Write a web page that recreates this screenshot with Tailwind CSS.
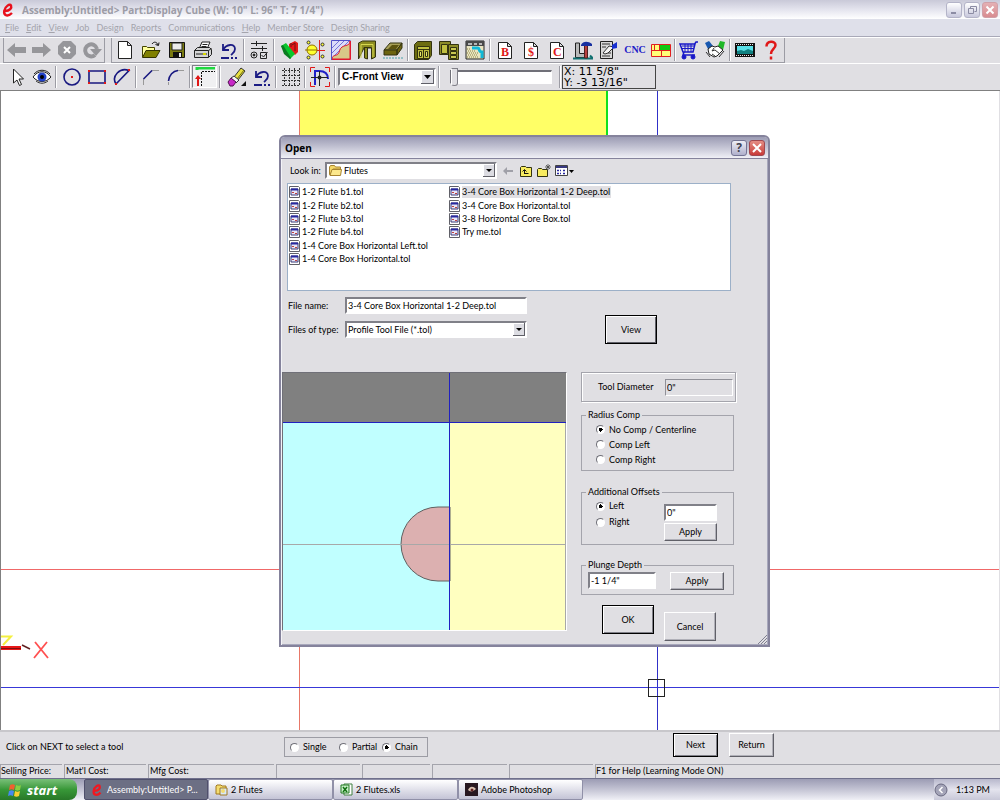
<!DOCTYPE html>
<html lang="en">
  <head>
    <meta charset="UTF-8" />
    <meta name="viewport" content="width=device-width, initial-scale=1.0" />
    <title>Assembly:Untitled - Part:Display Cube</title>
    <script src="https://cdn.jsdelivr.net/npm/@tailwindcss/browser@4"></script>
  </head>
  <body
    class="relative flex h-screen flex-col overflow-hidden bg-[#e0dfe3] font-['Lato','Liberation_Sans',sans-serif] text-[9px] leading-[12px] font-normal text-black"
  >
    <!-- Title bar -->
    <header class="flex h-[19px] items-center gap-2 bg-linear-to-b from-[#c9c9d8] via-[#e4e4ee] to-white px-[2px]">
      <svg class="h-4 w-3" viewBox="0 0 12 16" fill="none" stroke="#e8101c" stroke-width="2.4">
        <path d="M3 9 C8 9 10 6 9 3.500 C8 1.500 3 4 2.200 9 C1.500 14 6 15 10 11" />
      </svg>
      <h1 class="grow font-['Open_Sans',sans-serif] text-[10px] font-bold text-[#9c9ca6]">
        Assembly:Untitled&gt; Part:Display Cube (W: 10" L: 96" T: 7 1/4")
      </h1>
      <div class="flex gap-[2px]">
        <button aria-label="Minimize" class="h-4 w-4 rounded-[3px] border border-[#b4b4c8] bg-linear-to-b from-white to-[#c8c8dc]">
          <svg viewBox="0 0 14 14"><path d="M4 10h5" stroke="#8c8ca4" stroke-width="2" /></svg>
        </button>
        <button aria-label="Restore" class="h-4 w-4 rounded-[3px] border border-[#b4b4c8] bg-linear-to-b from-white to-[#c8c8dc]">
          <svg viewBox="0 0 14 14" fill="none" stroke="#8c8ca4"><path d="M5.500 5V3.500h6v5H9.500M3.500 5.500h5v5h-5z" /></svg>
        </button>
        <button aria-label="Close" class="h-4 w-4 rounded-[3px] border border-[#d0a0a8] bg-linear-to-b from-[#e4b0b4] to-[#d88c90]">
          <svg viewBox="0 0 14 14"><path d="M3.500 3.500l7 7M10.500 3.500l-7 7" stroke="#fff" stroke-width="2" /></svg>
        </button>
      </div>
    </header>

    <!-- Menu -->
    <nav class="flex h-[18px] items-center gap-[7px] border-b border-[#a9a9b8] bg-[#dfe0ea] px-[5px] text-[#a4a4ac]">
      <a href="#"><u>F</u>ile</a>
      <a href="#"><u>E</u>dit</a>
      <a href="#"><u>V</u>iew</a>
      <a href="#">Job</a>
      <a href="#">Design</a>
      <a href="#">Reports</a>
      <a href="#">Communications</a>
      <a href="#"><u>H</u>elp</a>
      <a href="#">Member Store</a>
      <a href="#">Design Sharing</a>
    </nav>

    <!-- Main toolbar -->
    <div class="flex h-[26px] border-t border-white">
      <div class="ml-[3px] flex items-center border-r border-b border-l border-[#9c9ca4] [&>button]:flex [&>button]:w-[25px] [&>button]:justify-center [&_svg]:size-5">
        <button aria-label="Back"><svg viewBox="0 0 20 20"><path d="M0 10L8 3v4h11v6H8v4z" fill="#96969a" /></svg></button>
        <button aria-label="Forward"><svg viewBox="0 0 20 20"><path d="M19 10L11 3v4H0v6h11v4z" fill="#96969a" /></svg></button>
        <button aria-label="Stop">
          <svg viewBox="0 0 20 20"><path d="M6 1h8l5 5v8l-5 5H6l-5-5V6z" fill="#96969a" /><path d="M7 7l6 6M13 7l-6 6" stroke="#fff" stroke-width="2" /></svg>
        </button>
        <button aria-label="Refresh">
          <svg viewBox="0 0 20 20" fill="none"><path d="M13 15A6 6 0 1 1 15 9" stroke="#96969a" stroke-width="4" /><path d="M8 9h12l-6 7z" fill="#96969a" /></svg>
        </button>
      </div>
      <div class="ml-[6px] flex items-center border-r border-b border-l border-[#9c9ca4] [&>button]:flex [&>button]:w-[26px] [&>button]:justify-center [&_svg]:size-5">
        <button aria-label="New"><svg viewBox="0 0 20 20"><path d="M3.500 1.500h9l4 4v13h-13zM12.500 1.500v4h4" fill="#fff" stroke="#222" /></svg></button>
        <button aria-label="Open">
          <svg viewBox="0 0 20 20"><path d="M1.500 17V6.500h4l1 1h7V11" fill="#ffff9c" stroke="#444400" /><path d="M1.500 17.500L5 10.500h14l-4 7z" fill="#808000" stroke="#333300" /><path d="M11 4c2-3 5-2 6 1M14.500 4.500l3 1 .5-3" fill="none" stroke="#111" /></svg>
        </button>
        <button aria-label="Save">
          <svg viewBox="0 0 20 20"><path d="M2.500 2.500h15v15h-15z" fill="#7a7a10" stroke="#111" /><path d="M5 3h10v7H5z" fill="#ececec" stroke="#222" /><path d="M6 12h9v6H6z" fill="#111" /><path d="M12 13h2v4h-2z" fill="#eee" /></svg>
        </button>
        <button aria-label="Print">
          <svg viewBox="0 0 20 20" stroke="#222"><path d="M6 9l3-7h8l-3 7z" fill="#fff" /><path d="M1.500 10.500l3-3h12l2 2v5l-3 3h-14z" fill="#d4d4d4" /><path d="M1.500 10.500h14v7M15.500 10.500l3-2M3 14h11" fill="none" /><path d="M10 14h3" stroke="#d8d800" stroke-width="2" /><path d="M9.500 4.500h5M8.500 6.500h5" /></svg>
        </button>
        <button aria-label="Undo">
          <svg viewBox="0 0 20 20" fill="none" stroke="#1c1c84" stroke-width="1.800"><path d="M4 4v6h6" /><path d="M4 10c3-6 12-7 12-1c0 3-2 4-4 6" /><path d="M2 18h8M12 18h2M16 18h2" /></svg>
        </button>
        <hr class="mx-px h-[22px] w-[2px] border-t-0 border-l border-[#9c9ca4] bg-white" />
        <button aria-label="Options">
          <svg viewBox="0 0 20 20" fill="none" stroke="#222"><path d="M2 3.500h16M7.500 1v5M2 8.500h16M13.500 6v5" /><circle cx="5" cy="15" r="3" /><circle cx="5" cy="15" r="1" fill="#111" /><path d="M11.500 12.500h6v6h-6zM12.500 15l2 2 4-5" /></svg>
        </button>
        <hr class="mx-px h-[22px] w-[2px] border-t-0 border-l border-[#9c9ca4] bg-white" />
        <button aria-label="Materials">
          <svg viewBox="0 0 20 20"><path d="M10 4l6-3 3 2v9l-3 3-6-7z" fill="#e41818" /><path d="M2 6l5-3 9 11-5 5z" fill="#0ac62c" /><path d="M2 6l2-1 8 13-1 1-6-5z" fill="#0a7c20" /><path d="M12 3v4M16 3v8M16 3l-3 2" stroke="#701010" fill="none" /></svg>
        </button>
        <button aria-label="Assembly parts">
          <svg viewBox="0 0 20 20"><path d="M14.500 0v20M8 10.500h12" stroke="#e02020" /><circle cx="7" cy="10" r="5" fill="#ffff30" stroke="#907000" /><path d="M0 10h12" stroke="#907000" /><circle cx="3.500" cy="2.500" r="1.500" fill="#ffff30" stroke="#333" /><circle cx="3.500" cy="17.500" r="1.500" fill="#ffff30" stroke="#333" /><circle cx="17.500" cy="4.500" r="1.500" fill="#ffff30" stroke="#333" /><circle cx="17.500" cy="16.500" r="1.500" fill="#ffff30" stroke="#333" /></svg>
        </button>
        <button aria-label="Profiles">
          <svg viewBox="0 0 20 20"><path d="M.5.500h19v19H.500z" fill="#dcdcf8" /><path d="M1 8l7-7M1 13L13 1M1 18L18 1" stroke="#7474d8" /><path d="M1 19c0-4 4-3 6-5s1-5 4-7 8-1 8-6v18z" fill="#d8c888" stroke="#e01830" /><path d="M.500 20V.500h19" fill="none" stroke="#5050c8" /><path d="M19.500 1v18.500H1" fill="none" stroke="#e01830" /></svg>
        </button>
        <button aria-label="Door">
          <svg viewBox="0 0 20 20" stroke="#333310"><path d="M1.500 19V3l4-2h13v16l-4 2V8h-4v11l-3-1V7z" fill="#8c8c20" /><path d="M4 18V4.500h12V17" stroke="#d8d850" fill="none" /><path d="M7.500 17V7.500h7" fill="none" /></svg>
        </button>
        <button aria-label="Drawer">
          <svg viewBox="0 0 20 20"><path d="M1 10l6-7h12l-5 7z" fill="#a8a058" stroke="#333310" /><path d="M5 9l4-4h7l-3 4z" fill="#5c5410" /><path d="M1 10h13v5H1zM14 10l5-7v5l-5 7z" fill="#6c6410" stroke="#333310" /><path d="M0 18h20" stroke="#48a0a8" stroke-dasharray="2 1" /></svg>
        </button>
        <hr class="mx-px h-[22px] w-[2px] border-t-0 border-l border-[#9c9ca4] bg-white" />
        <button aria-label="Cabinet">
          <svg viewBox="0 0 20 20" stroke="#333310"><path d="M1.500 4.500l3-3h14v14l-3 4h-14z" fill="#6c6c10" /><path d="M4.500 6.500h12v12h-12z" fill="#c0c040" /><path d="M5 9.500h11M10.500 10v8" /><path d="M6.500 11.500h2v5h-2zM12.500 11.500h2v5h-2z" fill="#e8e870" /></svg>
        </button>
        <button aria-label="Cabinet group">
          <svg viewBox="0 0 20 20" stroke="#333310"><path d="M.500 1.500h11v13H.500z" fill="#8c8c28" /><path d="M2.500 4.500h6v9h-6z" fill="#c0c040" /><path d="M9.500 4.500h10v15h-10z" fill="#8c8c28" /><path d="M11.500 7.500h6v3h-6zM11.500 11.500h6v3h-6zM11.500 15.500h6v3h-6z" fill="#c8c850" /></svg>
        </button>
        <button aria-label="Room layout">
          <svg viewBox="0 0 20 20"><path d="M1 1h18v18H1z" fill="#e8e4c0" stroke="#222" /><path d="M1 1h18v5H1z" fill="#484848" /><path d="M3 3h4v2H3zM9 3h3v2H9zM14 3h3v2h-3z" fill="#b8b8b8" /><path d="M7 8h6c2 0 0 4 4 4v6" fill="none" stroke="#10b8d8" stroke-width="3" /><path d="M2 9h4M3 11h8M2 13h11M3 15h10M2 17h12" stroke="#8c8040" stroke-dasharray="1 1" /></svg>
        </button>
        <hr class="mx-px h-[22px] w-[2px] border-t-0 border-l border-[#9c9ca4] bg-white" />
        <button aria-label="Bid">
          <svg viewBox="0 0 20 20"><path d="M3.500 2.500h9l4 4v12h-13zM12.500 2.500v4h4" fill="#fff" stroke="#222" /><text x="6" y="16" font-family="Liberation Serif" font-weight="bold" font-size="12" fill="#e01818">B</text></svg>
        </button>
        <button aria-label="Price">
          <svg viewBox="0 0 20 20"><path d="M3.500 2.500h9l4 4v12h-13zM12.500 2.500v4h4" fill="#fff" stroke="#222" /><text x="7" y="16" font-family="Liberation Serif" font-weight="bold" font-size="12" fill="#e01818">$</text></svg>
        </button>
        <button aria-label="Cut list">
          <svg viewBox="0 0 20 20"><path d="M3.500 2.500h9l4 4v12h-13zM12.500 2.500v4h4" fill="#fff" stroke="#222" /><text x="6" y="16" font-family="Liberation Serif" font-weight="bold" font-size="12" fill="#e01818">C</text></svg>
        </button>
        <button aria-label="Build">
          <svg viewBox="0 0 20 20"><path d="M2.500 3v14.500h9v-4h-5V3z" fill="#b8b8b8" stroke="#222" /><path d="M0 18.500h20l-3-3" stroke="#107070" stroke-width="2" fill="none" /><path d="M11.500 5h3v13h-3z" fill="#b84040" stroke="#502020" /><path d="M8 5c2-4 7-4 11-1v2H8z" fill="#1830a0" /></svg>
        </button>
        <button aria-label="Properties">
          <svg viewBox="0 0 20 20"><path d="M1.500 1.500h12v17h-12z" fill="#d8d8d8" stroke="#222" /><path d="M3 4h8M3 7h4M9 10h3M9 13h3M3 16h8" stroke="#333" /><path d="M4 13l6-7 5 1-6 6-3 1z" fill="#f4f4f4" stroke="#333" /><path d="M13 5l5-3v6l-5 1z" fill="#1830d0" /></svg>
        </button>
        <button class="font-['Liberation_Serif',serif] text-[10px] font-bold text-[#1c20c8]">CNC</button>
        <button aria-label="Nesting">
          <svg viewBox="0 0 20 20"><path d="M.500 4.500h19v12H.500z" fill="#ffff78" stroke="#e02020" /><path d="M9 5h10v5H9z" fill="#10c810" /><path d="M0 10.500h20M3.500 5v5M8.500 5v5M10.500 11v5M7 16.500h7" stroke="#e02020" /></svg>
        </button>
        <hr class="h-[22px] w-[2px] border-t-0 border-l border-[#9c9ca4] bg-white" />
        <button aria-label="Shop">
          <svg viewBox="0 0 20 20" fill="none" stroke="#1818c8"><path d="M1 4h15l-2 8H4zM15 5l2-3h2M5 12l-1 3h12" stroke-width="1.500" /><path d="M3 6h12M3 8.500h12M6 4v8M9 4v8M12 4v8" /><circle cx="5" cy="17" r="2" fill="#1818c8" /><circle cx="14" cy="17" r="2" fill="#1818c8" /></svg>
        </button>
        <button aria-label="Share">
          <svg viewBox="0 0 20 20"><path d="M0 3l4-2 4 5-4 5z" fill="#1858b0" /><path d="M20 2l-5-1-2 5 5 4z" fill="#20b828" /><path d="M3 9l4-3 3 1 3-1 5 4-6 6-3 1-5-3z" fill="#fff" stroke="#222" /><path d="M9 8l-2 3 3-1 5 4M7 14l3 2M1 12l4 5M19 11l-5 6" stroke="#333" fill="none" /></svg>
        </button>
        <hr class="mx-px h-[22px] w-[2px] border-t-0 border-l border-[#9c9ca4] bg-white" />
        <button aria-label="Videos">
          <svg viewBox="0 0 20 20"><path d="M0 3h20v14H0z" fill="#111" /><path d="M1 4.500h18M1 15.500h18" stroke="#e8e8e8" stroke-dasharray="1 1" /><path d="M2 6h16v8H2z" fill="#58e0e8" /><path d="M2 14v-3l4-1 3 1 4-2 5 2v3z" fill="#108080" /></svg>
        </button>
        <button aria-label="Help">
          <svg viewBox="0 0 20 20" fill="none" stroke="#e01818" stroke-width="2.500"><path d="M5.500 6.500c0-6 9-6 9-1.500c0 4-4.500 4-4.500 9M10 16.500v3" /></svg>
        </button>
      </div>
    </div>

    <!-- Drawing toolbar -->
    <div class="flex h-[28px] items-center border-t border-b border-t-white border-b-[#808080] pb-px pl-[4px] [&>button]:flex [&>button]:w-[25px] [&>button]:justify-center [&>button>svg]:size-5">
      <button aria-label="Select"><svg viewBox="0 0 20 20"><path d="M6.500 2v14l3.500-3 2.500 5.500 2-1L12 12h4.500z" fill="#fff" stroke="#222" /></svg></button>
      <button aria-label="View">
        <svg viewBox="0 0 20 20"><path d="M1 10c5-7 13-7 18 0c-5 6-13 6-18 0z" fill="#fff" stroke="#222" /><path d="M2 7C6 2 14 2 18 7" fill="none" stroke="#222" /><circle cx="10" cy="10" r="4.500" fill="#2040c8" /><circle cx="10" cy="10" r="2" fill="#000" /><path d="M4 14c4 3 8 3 12 0" stroke="#333" fill="none" /></svg>
      </button>
      <hr class="mr-[2px] ml-px h-[22px] w-[2px] border-t-0 border-l border-[#9c9ca4] bg-white" />
      <button aria-label="Circle"><svg viewBox="0 0 20 20"><circle cx="10" cy="10" r="8" fill="none" stroke="#181880" stroke-width="1.600" /><path d="M9 9h2v2H9z" fill="#e01818" /></svg></button>
      <button aria-label="Rectangle">
        <svg viewBox="0 0 20 20"><path d="M2 4h16v12H2z" fill="none" stroke="#181880" stroke-width="1.600" /><path d="M1 3h2v2H1zM17 3h2v2h-2zM1 15h2v2H1zM17 15h2v2h-2z" fill="#e01818" /></svg>
      </button>
      <button aria-label="Arc">
        <svg viewBox="0 0 20 20"><path d="M4 17C-1 9 8 0 17 3.500L4 17" fill="none" stroke="#181880" stroke-width="1.600" /><path d="M3 16h2v2H3zM16 2h2v2h-2z" fill="#e01818" /></svg>
      </button>
      <hr class="mx-px h-[22px] w-[2px] border-t-0 border-l border-[#9c9ca4] bg-white" />
      <button aria-label="Chamfer"><svg viewBox="0 0 20 20" fill="none"><path d="M2.500 18v-6M10 3.500h8" stroke="#999" /><path d="M2.500 12L11 3.500" stroke="#181880" stroke-width="1.600" /></svg></button>
      <button aria-label="Fillet"><svg viewBox="0 0 20 20" fill="none"><path d="M2.500 18v-3M12 3.500h6" stroke="#999" /><path d="M2.500 14C3 8 7 4 12 3.500" stroke="#181880" stroke-width="1.600" /></svg></button>
      <hr class="mx-px h-[22px] w-[2px] border-t-0 border-l border-[#9c9ca4] bg-white" />
      <button aria-label="Profile path" class="h-[23px] items-center border border-t-[#808088] border-r-white border-b-white border-l-[#808088] bg-[#f0f0f2]">
        <svg viewBox="0 0 20 20" fill="none"><path d="M2 3V1h18" stroke="#20d840" stroke-width="3" /><path d="M3 19V9" stroke="#e01818" stroke-width="2" /><path d="M0 12l3-4 3 4z" fill="#e01818" /><path d="M6.500 19V4.500H20" stroke="#111" stroke-dasharray="2 1" /></svg>
      </button>
      <hr class="mr-[3px] ml-[2px] h-[22px] w-[2px] border-t-0 border-l border-[#9c9ca4] bg-white" />
      <button aria-label="Erase">
        <svg viewBox="0 0 20 20"><path d="M7 10l7-9 4 3-7 9z" fill="#e8e040" stroke="#333" /><path d="M10 12L17 3" stroke="#6c6c10" /><path d="M4 11l3-2 5 4-3 3z" fill="#f4f4f4" stroke="#333" /><path d="M1 15l3-4 5 4-3 4H3z" fill="#c828c8" stroke="#501050" /><path d="M19 14v5h-5z" fill="#111" /></svg>
      </button>
      <button aria-label="Undo step">
        <svg viewBox="0 0 20 20" fill="none" stroke="#1c1c84" stroke-width="1.800"><path d="M4 4v6h6" /><path d="M4 10c3-6 12-7 12-1c0 3-2 4-4 6" /><path d="M2 18h8M12 18h2M16 18h2" /></svg>
      </button>
      <hr class="mx-px h-[22px] w-[2px] border-t-0 border-l border-[#9c9ca4] bg-white" />
      <button aria-label="Grid">
        <svg viewBox="0 0 20 20" fill="none" stroke="#333" stroke-dasharray="2 1"><path d="M3.500 1v18M8.500 1v18M13.500 1v18M18.500 1v18M1 3.500h18M1 8.500h18M1 13.500h18M1 18.500h18" /></svg>
      </button>
      <hr class="mx-px h-[22px] w-[2px] border-t-0 border-l border-[#9c9ca4] bg-white" />
      <button aria-label="Snap">
        <svg viewBox="0 0 20 20" fill="none"><path d="M.500 5V.500H5M15 .500h4.500V5M.500 15v4.500H5M15 19.500h4.500V15" stroke="#e01818" /><path d="M5 18V4h4c6 0 9 3 9 8" stroke="#2020c8" stroke-width="2" /><path d="M9.500 4v15M1 10.500h17" stroke="#222" /><circle cx="9.500" cy="10.500" r="2" fill="#222" /></svg>
      </button>
      <hr class="mx-[2px] h-[22px] w-[2px] border-t-0 border-l border-[#9c9ca4] bg-white" />
      <div class="relative">
        <select aria-label="View" class="block h-[18px] w-[98px] appearance-none border-2 border-t-[#808088] border-r-white border-b-white border-l-[#808088] bg-white pl-[2px] font-['Liberation_Sans',sans-serif] text-[10px] leading-[14px] font-bold">
          <option>C-Front View</option>
        </select>
        <svg class="pointer-events-none absolute top-[2px] right-[2px] h-[14px] w-[13px]" viewBox="0 0 13 14"><path d="M0 0h13v14H0z" fill="#606068" /><path d="M0 0h12v13H0z" fill="#fff" /><path d="M1 1h11v12H1z" fill="#dcdce2" /><path d="M3 5h7L6.500 9z" /></svg>
      </div>
      <hr class="mx-[2px] h-[22px] w-[2px] border-t-0 border-l border-[#9c9ca4] bg-white" />
      <input
        type="range"
        aria-label="Depth"
        value="0"
        class="ml-2 h-[14px] w-[102px] appearance-none border border-t-2 border-[#707078] border-r-white border-b-white bg-white [&::-webkit-slider-thumb]:h-[18px] [&::-webkit-slider-thumb]:w-[7px] [&::-webkit-slider-thumb]:appearance-none [&::-webkit-slider-thumb]:rounded-b-[3px] [&::-webkit-slider-thumb]:border [&::-webkit-slider-thumb]:border-[#808088] [&::-webkit-slider-thumb]:border-l-white [&::-webkit-slider-thumb]:bg-[#e0dfe3]"
      />
      <hr class="mr-px ml-[7px] h-[22px] w-[2px] border-t-0 border-l border-[#9c9ca4] bg-white" />
      <output class="h-[24px] w-[94px] border border-[#444] pl-px font-['DejaVu_Sans',sans-serif] text-[11px] leading-[11px]">X: 11 5/8"<br />Y: -3 13/16"</output>
    </div>

    <!-- Drawing area -->
    <main class="min-h-0 grow border-r border-l border-r-[#e0dfe3] border-l-[#808080] bg-white">
      <svg class="h-full w-full" shape-rendering="crispEdges" fill="none">
        <rect x="299" y="0" width="306" height="320" fill="#ffff66" />
        <rect x="298" y="0" width="1" height="640" fill="#e87868" />
        <rect x="605" y="0" width="2" height="320" fill="#10e020" />
        <rect x="0" y="478" width="1000" height="1" fill="#f06868" />
        <rect x="656" y="0" width="1" height="640" fill="#3030c8" />
        <rect x="0" y="596" width="1000" height="1" fill="#3838d8" />
        <rect x="647.500" y="588.500" width="16" height="17" stroke="#222" />
        <path d="M0 557h20" stroke="#e81818" stroke-width="4" />
        <path d="M0 557h20" stroke="#801010" />
        <g shape-rendering="auto">
          <path d="M0 545.500h10L2 554" stroke="#f4f040" stroke-width="2" />
          <path d="M21 554l8 4" stroke="#602020" stroke-width="1.500" />
          <path d="M34 551l13 16M46 551l-13 16" stroke="#ff5050" stroke-width="1.800" />
        </g>
      </svg>
    </main>

    <!-- Prompt bar -->
    <div class="flex h-[34px] items-center border-t-2 border-[#c8c7cb] pb-[2px] pl-[6px]">
      <p class="w-[278px]">Click on NEXT to select a tool</p>
      <div class="flex h-5 w-[144px] items-center border border-[#9c9ca4] pl-[5px]">
        <label class="flex w-[49px] items-center gap-1"><input type="radio" name="mode" class="size-[9px] appearance-none rounded-full border border-t-[#707078] border-r-white border-b-white border-l-[#707078] bg-white checked:bg-[radial-gradient(circle,#000_0_2px,#fff_2px)]" />Single</label>
        <label class="flex w-[43px] items-center gap-1"><input type="radio" name="mode" class="size-[9px] appearance-none rounded-full border border-t-[#707078] border-r-white border-b-white border-l-[#707078] bg-white checked:bg-[radial-gradient(circle,#000_0_2px,#fff_2px)]" />Partial</label>
        <label class="flex items-center gap-1"><input type="radio" name="mode" checked class="size-[9px] appearance-none rounded-full border border-t-[#707078] border-r-white border-b-white border-l-[#707078] bg-white checked:bg-[radial-gradient(circle,#000_0_2px,#fff_2px)]" />Chain</label>
      </div>
      <div class="ml-[245px] flex gap-[11px] pb-[4px]">
        <button class="h-6 w-[45px] border border-black shadow-[inset_1px_1px_#fff,inset_-1px_-1px_#808088]">Next</button>
        <button class="h-6 w-[45px] border border-t-white border-r-[#606068] border-b-[#606068] border-l-white shadow-[inset_-1px_-1px_#b0b0b8]">Return</button>
      </div>
    </div>

    <!-- Status bar -->
    <footer class="flex h-[14px] gap-[2px] leading-[12px] *:border-t *:border-l *:border-[#a4a4ac] *:whitespace-nowrap">
      <span class="w-[62px]">Selling Price:</span>
      <span class="w-[82px] pl-px">Mat'l Cost:</span>
      <span class="w-[126px] pl-px">Mfg Cost:</span>
      <span class="w-[84px]"></span>
      <span class="w-[68px]"></span>
      <span class="w-[75px]"></span>
      <span class="w-[84px]"></span>
      <span class="grow">F1 for Help (Learning Mode ON)</span>
    </footer>

    <!-- Taskbar -->
    <div class="flex h-[22px] border-t border-[#70708c] bg-linear-to-b from-[#9c9cb4] via-[#c4c4d4] to-[#f0f0f6] text-black">
      <button class="mr-[7px] flex w-[77px] items-center gap-[5px] rounded-r-lg bg-linear-to-b from-[#78c078] via-[#389838] to-[#287828] pl-2 font-['Open_Sans',sans-serif] text-[13px] leading-[20px] font-bold text-white italic">
        <svg class="size-[14px]" viewBox="0 0 14 14"><path d="M2 2c2-1 3-1 5 0L6 7C4 6 3 6 1 7z" fill="#f06030" /><path d="M8 2c2 1 4 1 5 0l-1 5c-2 1-3 1-5 0z" fill="#88d040" /><path d="M1 8c2-1 3-1 5 0l-1 5c-2-1-3-1-5 0z" fill="#4888f0" /><path d="M7 8c2 1 3 1 5 0l-1 5c-2 1-3 1-5 0z" fill="#f8d030" /></svg>
        start
      </button>
      <button class="flex w-[124px] items-center gap-1 rounded-[2px] border border-[#50506c] bg-[#6c6f84] pl-[6px] whitespace-nowrap text-white">
        <svg class="h-[14px] w-3" viewBox="0 0 12 16" fill="none" stroke="#f01820" stroke-width="2.600"><path d="M3 9 C8 9 10 6 9 3.500 C8 1.500 3 4 2.200 9 C1.500 14 6 15 10 11" /></svg>
        Assembly:Untitled&gt; P...
      </button>
      <button class="flex w-[125px] items-center gap-[3px] rounded-[2px] border border-[#9090a8] bg-linear-to-b from-white to-[#c4c4d6] pl-[6px]">
        <svg class="size-[13px]" viewBox="0 0 13 13"><path d="M1 3l1-1h4l1 1h4v8H1z" fill="#f4dc70" stroke="#a07820" /><path d="M5 5h7v7H5z" fill="#d8e8f8" stroke="#a07820" /><circle cx="8" cy="8" r="2" fill="#f4dc70" /></svg>
        2 Flutes
      </button>
      <button class="flex w-[125px] items-center gap-[3px] rounded-[2px] border border-[#9090a8] bg-linear-to-b from-white to-[#c4c4d6] pl-[6px]">
        <svg class="size-[13px]" viewBox="0 0 13 13"><path d="M4 1h8v11H4z" fill="#fff" stroke="#408040" /><path d="M1 2h8v8H1z" fill="#c8f0c8" stroke="#207820" /><path d="M3 4l4 5M7 4L3 9" stroke="#107010" stroke-width="1.500" /></svg>
        2 Flutes.xls
      </button>
      <button class="flex w-[125px] items-center gap-[3px] rounded-[2px] border border-[#9090a8] bg-linear-to-b from-white to-[#c4c4d6] pl-[6px]">
        <svg class="size-[13px]" viewBox="0 0 13 13"><path d="M0 0h13v13H0z" fill="#281820" /><path d="M3 7c2-4 5-4 8-1c-3 3-6 3-8 1z" fill="#d8c0b0" /><circle cx="7" cy="7" r="1.500" fill="#602020" /></svg>
        Adobe Photoshop
      </button>
      <div class="grow"></div>
      <div class="flex w-[66px] items-center gap-2 bg-linear-to-b from-[#b8b8cc] via-[#e4e4ee] to-[#c8c8d8]">
        <button aria-label="Show hidden icons">
          <svg class="size-[14px]" viewBox="0 0 14 14"><circle cx="7" cy="7" r="6" fill="#a4a4b8" stroke="#686880" /><path d="M8.500 4l-3 3 3 3" fill="none" stroke="#fff" stroke-width="1.500" /></svg>
        </button>
        <time>1:13 PM</time>
      </div>
    </div>

    <!-- Open dialog -->
    <div role="dialog" aria-labelledby="dialog-title" class="absolute top-[135px] left-[279px] flex w-[491px] flex-col rounded-t-[6px] border-2 border-[#85839c] bg-[#e0dfe3] pb-[4px] shadow-[inset_1px_0_#f4f4f8,inset_-1px_-1px_#a8a8bc]">
      <div class="flex h-[22px] items-center gap-[2px] rounded-t-[4px] border-b border-[#85839c] bg-linear-to-b from-[#9c9cb4] via-[#c4c4d4] to-[#f0f0f6] pr-[3px] pl-[4px]">
        <h2 id="dialog-title" class="grow font-['Open_Sans',sans-serif] text-[10px] font-bold">Open</h2>
        <button aria-label="Help" class="h-4 w-4 rounded-[3px] border border-[#747494] bg-linear-to-b from-[#eeeef6] to-[#b0b0cc] font-['Open_Sans',sans-serif] text-[12px] leading-[13px] font-bold text-[#404050]">?</button>
        <button aria-label="Close dialog" class="h-4 w-4 rounded-[3px] border border-[#a04850] bg-linear-to-b from-[#e48c84] to-[#c83838]">
          <svg viewBox="0 0 14 14"><path d="M3 3l8 8M11 3l-8 8" stroke="#fff" stroke-width="2" /></svg>
        </button>
      </div>

      <div class="mt-[3px] flex items-center pl-[9px]">
        <label for="look-in" class="w-[35px] whitespace-nowrap">Look in:</label>
        <div class="relative">
          <select id="look-in" class="block h-[17px] w-[172px] appearance-none border-2 border-t-[#808088] border-r-white border-b-white border-l-[#808088] bg-white pl-[17px] leading-[13px]">
            <option>Flutes</option>
          </select>
          <svg class="pointer-events-none absolute top-[3px] left-[4px] h-[11px] w-[13px]" viewBox="0 0 13 11"><path d="M.500 9V2l1-1.500h4l1 1.500h5v2H4L1 10z" fill="#f4d868" stroke="#a88430" /><path d="M1 10.500l2-6h9.500l-1 6z" fill="#fce88c" stroke="#a88430" /></svg>
          <svg class="pointer-events-none absolute top-[2px] right-[2px] h-[13px] w-[12px]" viewBox="0 0 12 13"><path d="M0 0h12v13H0z" fill="#606068" /><path d="M0 0h11v12H0z" fill="#fff" /><path d="M1 1h10v11H1z" fill="#dcdce2" /><path d="M3 5h6L6 8z" /></svg>
        </div>
        <div class="flex items-center gap-[4px] pl-[4px]">
          <button aria-label="Back"><svg class="size-[14px]" viewBox="0 0 14 14"><path d="M2 7l4-4v3h6v2H6v3z" fill="#a0a0a8" /></svg></button>
          <button aria-label="Up one level"><svg class="size-[14px]" viewBox="0 0 14 14"><path d="M1.500 12.500v-9l1-1h4l1 1h5v9z" fill="#f8ec60" stroke="#333310" /><path d="M5.500 10V6M3.500 7.500l2-2 2 2M5.500 9.500h4" fill="none" stroke="#111" /></svg></button>
          <button aria-label="New folder"><svg class="size-[14px]" viewBox="0 0 14 14"><path d="M.500 12.500v-7l1-1h3l1 1h5v7z" fill="#f8ec60" stroke="#333310" /><path d="M11 0v6M8 3h6M9 1l4 4M13 1L9 5" stroke="#444" stroke-width=".8" /></svg></button>
          <button aria-label="View menu"><svg class="h-[14px] w-[19px]" viewBox="0 0 19 14"><path d="M.500 1.500h12v10H.500z" fill="#fff" stroke="#444" /><path d="M1 3h11" stroke="#383880" stroke-width="2" /><path d="M2 6.500h2M5 6.500h1M8 6.500h2M2 9.500h2M5 9.500h1M8 9.500h2" stroke="#2828a0" stroke-width="1.500" /><path d="M14 6h5l-2.500 3z" /></svg></button>
        </div>
      </div>

      <ul class="mt-[4px] ml-[6px] grid h-[108px] w-[444px] grid-flow-col grid-cols-[160px_1fr] grid-rows-[14px_13px_13px_14px_13px_14px] border border-[#9cb0c8] bg-white pt-px pl-px *:flex *:items-center *:gap-[2px]" id="files"></ul>

      <div class="flex items-start pl-[7px]">
        <div class="grid w-[240px] grid-cols-[57px_1fr] items-center gap-y-[7px] pt-[6px]">
          <label for="file-name">File name:</label>
          <input id="file-name" type="text" value="3-4 Core Box Horizontal 1-2 Deep.tol" class="h-[17px] w-[182px] border-2 border-t-[#808088] border-r-white border-b-white border-l-[#808088] bg-white pl-px" />
          <label for="file-type">Files of type:</label>
          <div class="relative w-[182px]">
            <select id="file-type" class="block h-[17px] w-full appearance-none border-2 border-t-[#808088] border-r-white border-b-white border-l-[#808088] bg-white pl-px leading-[13px]">
              <option>Profile Tool File (*.tol)</option>
            </select>
            <svg class="pointer-events-none absolute top-[2px] right-[2px] h-[13px] w-[12px]" viewBox="0 0 12 13"><path d="M0 0h12v13H0z" fill="#606068" /><path d="M0 0h11v12H0z" fill="#fff" /><path d="M1 1h10v11H1z" fill="#dcdce2" /><path d="M3 5h6L6 8z" /></svg>
          </div>
        </div>
        <button class="mt-6 ml-[77px] h-[29px] w-[52px] border border-black shadow-[inset_1px_1px_#fff,inset_-1px_-1px_#606068]">View</button>
      </div>

      <div class="mt-7 flex gap-[14px] pl-px">
        <!-- Tool preview -->
        <svg class="h-[259px] w-[285px] border border-t-[#707078] border-r-white border-b-white border-l-[#707078]" viewBox="0 0 283 257" fill="none" shape-rendering="crispEdges">
          <rect x="0" y="0" width="283" height="49" fill="#808080" />
          <rect x="0" y="49" width="167" height="208" fill="#c0ffff" />
          <rect x="167" y="49" width="116" height="208" fill="#ffffc0" />
          <path d="M167 134h-12a37 37 0 0 0 0 74h12z" fill="#dcb0b0" stroke="#606060" shape-rendering="auto" />
          <rect x="0" y="171" width="283" height="1" fill="#a8a8a8" />
          <rect x="282" y="49" width="1" height="208" fill="#a8a8a8" />
          <rect x="0" y="49" width="283" height="1" fill="#2020c0" />
          <rect x="166" y="0" width="1" height="257" fill="#2020c0" />
        </svg>

        <div class="w-[155px]">
          <div class="flex h-[30px] items-center border border-[#a4a4ac] pl-4 shadow-[inset_1px_1px_#fff,1px_1px_#fff]">
            <label for="diameter" class="w-[67px]">Tool Diameter</label>
            <input id="diameter" type="text" readonly value='0"' class="h-[17px] w-[68px] border border-t-[#909098] border-r-white border-b-white border-l-[#909098] pl-px" />
          </div>

          <fieldset class="mt-[7px] w-[153px] border border-[#a4a4ac] pb-[3px] pl-[14px]">
            <legend class="-ml-[10px] px-[2px]">Radius Comp</legend>
            <label class="mt-px flex h-[15px] items-center gap-1"><input type="radio" name="comp" checked class="size-[9px] appearance-none rounded-full border border-t-[#707078] border-r-white border-b-white border-l-[#707078] bg-white checked:bg-[radial-gradient(circle,#000_0_2px,#fff_2px)]" />No Comp / Centerline</label>
            <label class="flex h-[15px] items-center gap-1"><input type="radio" name="comp" class="size-[9px] appearance-none rounded-full border border-t-[#707078] border-r-white border-b-white border-l-[#707078] bg-white checked:bg-[radial-gradient(circle,#000_0_2px,#fff_2px)]" />Comp Left</label>
            <label class="flex h-[15px] items-center gap-1"><input type="radio" name="comp" class="size-[9px] appearance-none rounded-full border border-t-[#707078] border-r-white border-b-white border-l-[#707078] bg-white checked:bg-[radial-gradient(circle,#000_0_2px,#fff_2px)]" />Comp Right</label>
          </fieldset>

          <fieldset class="mt-[15px] w-[153px] border border-[#a4a4ac] pb-[3px] pl-[14px]">
            <legend class="-ml-[10px] px-[2px]">Additional Offsets</legend>
            <div class="flex">
              <div class="w-[68px]">
                <label class="flex h-4 items-center gap-1"><input type="radio" name="offset" checked class="size-[9px] appearance-none rounded-full border border-t-[#707078] border-r-white border-b-white border-l-[#707078] bg-white checked:bg-[radial-gradient(circle,#000_0_2px,#fff_2px)]" />Left</label>
                <label class="flex h-4 items-center gap-1"><input type="radio" name="offset" class="size-[9px] appearance-none rounded-full border border-t-[#707078] border-r-white border-b-white border-l-[#707078] bg-white checked:bg-[radial-gradient(circle,#000_0_2px,#fff_2px)]" />Right</label>
              </div>
              <div class="flex flex-col gap-[2px] pt-[6px]">
                <input type="text" aria-label="Offset" value='0"' class="h-[17px] w-[53px] border-2 border-t-[#808088] border-r-white border-b-white border-l-[#808088] bg-white pl-px" />
                <button class="h-[18px] w-[53px] border border-t-white border-r-[#606068] border-b-[#606068] border-l-white shadow-[inset_-1px_-1px_#b0b0b8]">Apply</button>
              </div>
            </div>
          </fieldset>

          <fieldset class="mt-[14px] flex w-[153px] gap-[14px] border border-[#a4a4ac] pt-px pb-[4px] pl-[6px]">
            <legend class="-ml-[2px] px-[2px]">Plunge Depth</legend>
            <input type="text" aria-label="Plunge depth" value='-1 1/4"' class="h-[17px] w-[68px] border-2 border-t-[#808088] border-r-white border-b-white border-l-[#808088] bg-white pl-px" />
            <button class="h-[18px] w-[54px] border border-t-white border-r-[#606068] border-b-[#606068] border-l-white shadow-[inset_-1px_-1px_#b0b0b8]">Apply</button>
          </fieldset>

          <div class="mt-[10px] flex items-end gap-[10px] pl-[21px]">
            <button class="mb-[7px] h-[29px] w-[52px] border border-black shadow-[inset_1px_1px_#fff,inset_-1px_-1px_#808088]">OK</button>
            <button class="h-[29px] w-[52px] border border-t-white border-r-[#606068] border-b-[#606068] border-l-white shadow-[inset_-1px_-1px_#b0b0b8]">Cancel</button>
          </div>
        </div>
      </div>
      <svg class="absolute right-px bottom-px size-[9px]" viewBox="0 0 9 9" stroke="#808090"><path d="M0 9L9 0M3 9l6-6M6 9l3-3" /></svg>
    </div>

    <script>
      const files = [
        "1-2 Flute b1.tol",
        "1-2 Flute b2.tol",
        "1-2 Flute b3.tol",
        "1-2 Flute b4.tol",
        "1-4 Core Box Horizontal Left.tol",
        "1-4 Core Box Horizontal.tol",
        "3-4 Core Box Horizontal 1-2 Deep.tol",
        "3-4 Core Box Horizontal.tol",
        "3-8 Horizontal Core Box.tol",
        "Try me.tol",
      ];
      const selected = "3-4 Core Box Horizontal 1-2 Deep.tol";

      document.getElementById("files").innerHTML = files
        .map(
          (name) => `
          <li>
            <svg class="h-3 w-[11px]" viewBox="0 0 11 12"><path d="M.5.500h9l1 1v10H.500z" fill="#fff" stroke="#606068" /><path d="M2 3h7v6H2z" fill="#e8e8f8" stroke="#383878" /><path d="M2 3.500h7" stroke="#2828a0" stroke-width="2" /><path d="M3 6.500h2M6 7.500h2" stroke="#c04040" /></svg>
            <span class="${name === selected ? "bg-[#e0dfe3]" : ""} pr-px">${name}</span>
          </li>`
        )
        .join("");
    </script>
  </body>
</html>
